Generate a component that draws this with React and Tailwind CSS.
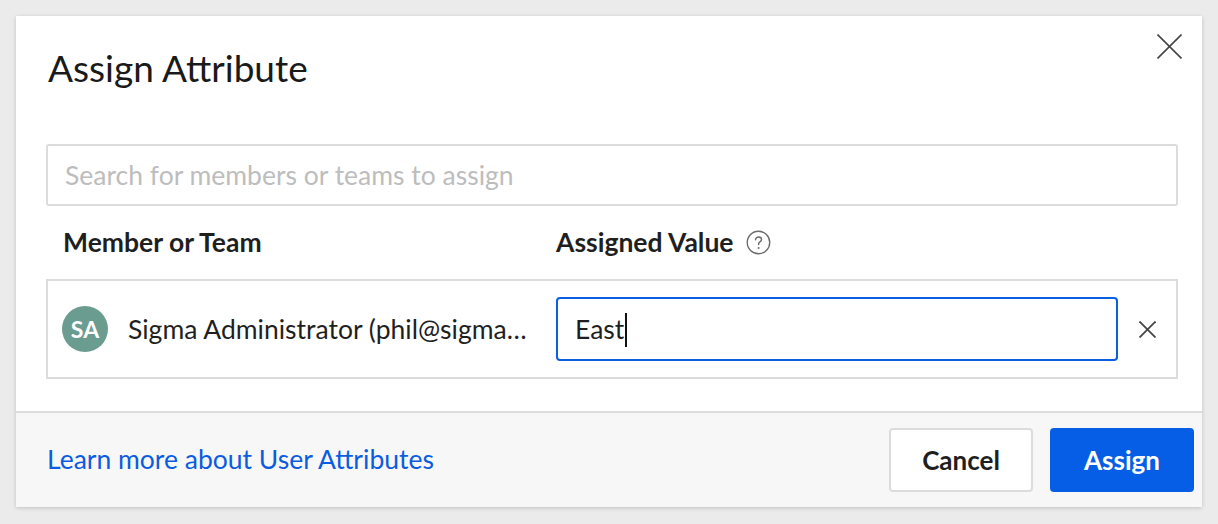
import React from "react";

function HelpIcon() {
  return (
    <svg width="25" height="25" viewBox="0 0 24 24" fill="none" className="text-[#6b6b6b]">
      <circle cx="12" cy="12" r="10.8" stroke="currentColor" strokeWidth="1.3" />
      <path
        d="M9.2 9.4c0-1.6 1.2-2.7 2.9-2.7 1.6 0 2.8 1 2.8 2.4 0 1.2-.7 1.8-1.6 2.4-.8.5-1.2.9-1.2 1.9v.6"
        stroke="currentColor"
        strokeWidth="1.4"
        strokeLinecap="round"
      />
      <circle cx="12.1" cy="17.2" r="0.95" fill="currentColor" />
    </svg>
  );
}

function Cross({ size, stroke }) {
  return (
    <svg width={size} height={size} viewBox={`0 0 ${size} ${size}`} fill="none" stroke="currentColor" strokeWidth={stroke}>
      <line x1="0.5" y1="0.5" x2={size - 0.5} y2={size - 0.5} />
      <line x1={size - 0.5} y1="0.5" x2="0.5" y2={size - 0.5} />
    </svg>
  );
}

export default function App() {
  return (
    <div
      className="min-h-screen w-full bg-[#ebebeb] p-4"
      style={{ fontFamily: "Lato, 'Noto Sans', sans-serif" }}
    >
      <div className="flex w-[1186px] flex-col bg-white shadow-[0_1px_4px_rgba(0,0,0,0.18)]">
        {/* header */}
        <div className="relative px-[32px] pt-[30px]">
          <h1 className="text-[37px] leading-[44px] font-normal text-[#1a1a1a]">Assign Attribute</h1>
          <button type="button" className="absolute right-[20px] top-[18px] text-[#444]">
            <Cross size={25} stroke={1.6} />
          </button>
        </div>

        <div className="pl-[30px] pr-[24px] pt-[54px] pb-[32px]">
          <input
            type="text"
            placeholder="Search for members or teams to assign"
            className="h-[62px] w-full rounded-[3px] border-2 border-[#dcdcdc] px-[17px] text-[26.5px] text-[#222] outline-none placeholder:text-[#bdbdbd]"
          />

          <div className="flex h-[73px] items-center">
            <div className="w-[510px] pl-[17px] text-[26.5px] font-bold text-[#1f1f1f]">Member or Team</div>
            <div className="flex items-center gap-[12px] text-[26.5px] font-bold text-[#1f1f1f]">
              Assigned Value
              <HelpIcon />
            </div>
          </div>

          <div className="flex h-[100px] items-center border-2 border-[#dcdcdc] pl-[14px] pr-[20px]">
            <div className="flex w-[470px] min-w-0 items-center gap-[20px]">
              <div className="flex h-[46px] w-[46px] shrink-0 items-center justify-center rounded-full bg-[#6a9c90] text-[23px] font-bold text-white">
                SA
              </div>
              <div className="min-w-0 truncate pt-[2px] text-[26.5px] text-[#1f1f1f]">Sigma Administrator (phil@sigmacomputing.com)</div>
            </div>
            <div className="ml-[24px] flex h-[64px] flex-1 items-center rounded-[4px] border-2 border-[#0a5fe0] px-[17px] pt-[2px] text-[26.5px] text-[#1f1f1f]">
              East<span className="ml-[1px] inline-block h-[34px] w-[2px] bg-[#111]" />
            </div>
            <div className="ml-[21px] text-[#444]">
              <Cross size={17} stroke={1.8} />
            </div>
          </div>
        </div>

        {/* footer */}
        <div className="flex h-[96px] items-center justify-between border-t-2 border-[#dcdcdc] bg-[#f7f7f7] pl-[31px] pr-[8px]">
          <a href="#" className="text-[26.5px] text-[#0b5ce0]">Learn more about User Attributes</a>
          <div className="flex gap-[17px]">
            <button type="button" className="h-[64px] w-[144px] rounded-[4px] border-2 border-[#dcdcdc] bg-white text-[26px] font-bold text-[#1f1f1f]">
              Cancel
            </button>
            <button type="button" className="h-[64px] w-[144px] rounded-[4px] bg-[#075ee6] text-[26px] font-bold text-white">
              Assign
            </button>
          </div>
        </div>
      </div>
    </div>
  );
}
